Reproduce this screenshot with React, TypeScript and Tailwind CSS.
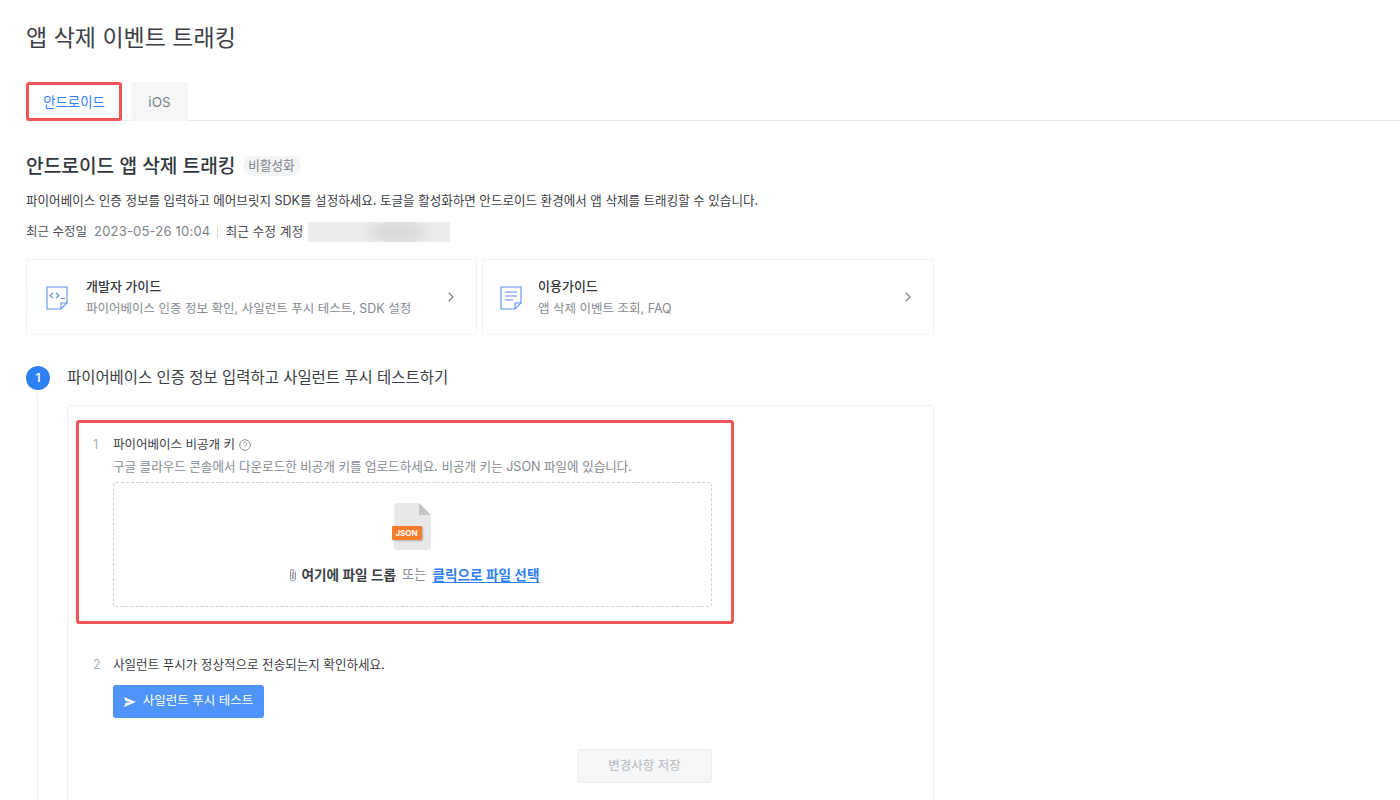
import { ChevronRight } from "lucide-react"

const font = "font-['Inter','Noto_Sans_CJK_KR',sans-serif]"

function DevIcon() {
  return (
    <svg width="22" height="24" viewBox="0 0 22 24" fill="none" stroke="#5b8ff0" strokeWidth="1.1">
      <path d="M1 1h20v16l-6 6H1z" />
      <path d="M21 17h-6v6" />
      <path d="M7 7L4 9.5 7 12M10 7l3 2.5-3 2.5M15 12.5h4" />
    </svg>
  )
}

function GuideIcon() {
  return (
    <svg width="22" height="24" viewBox="0 0 22 24" fill="none" stroke="#5b8ff0" strokeWidth="1.1">
      <path d="M1 1h20v16l-6 6H1z" />
      <path d="M21 17h-6v6" />
      <path d="M5 6h12M5 10h12M5 14h8" />
    </svg>
  )
}

function JsonIcon() {
  return (
    <div className="relative w-[40px] h-[47px] mr-[4px]">
      <svg width="37" height="47" viewBox="0 0 37 47" className="absolute right-0 top-0">
        <path d="M3 0h22l12 12v32a3 3 0 0 1-3 3H3a3 3 0 0 1-3-3V3a3 3 0 0 1 3-3z" fill="#e8e8e8" />
        <path d="M25 0l12 12H25z" fill="#c4c4c4" />
      </svg>
      <div className="absolute left-[1px] top-[23px] w-[30px] h-[14px] bg-[#f97c2b] rounded-[1px] shadow-[1px_1px_2px_rgba(0,0,0,0.25)] flex items-center justify-center text-[8px] font-bold text-white">
        JSON
      </div>
    </div>
  )
}

function GuideCard({ icon, title, desc, cardClass, iconWidth }: { icon: React.ReactNode; title: string; desc: string; cardClass: string; iconWidth: string }) {
  return (
    <div className={`h-[76px] border border-[#eef0f2] rounded-[3px] flex items-center pr-[17px] ${cardClass}`}>
      <div className={`mt-[1px] ${iconWidth}`}>{icon}</div>
      <div className="flex-1">
        <div className="text-[13px] leading-[20px] font-medium text-[#33373d]">{title}</div>
        <div className="text-[12.5px] leading-[20px] mt-[3px] text-[#868b92]">{desc}</div>
      </div>
      <ChevronRight size={16} strokeWidth={1.8} className="text-[#7c8289]" />
    </div>
  )
}

export default function App() {
  return (
    <div className={`${font} h-[800px] overflow-hidden bg-white pl-[26px] text-[#33373d]`}>
      <h1 className="pt-[22px] text-[23px] leading-[32px] text-[#3c4046]">앱 삭제 이벤트 트래킹</h1>

      <div className="mt-[28px] flex gap-[9px] h-[39px] border-b border-[#e8eaed]">
        <div className="w-[96px] h-[39px] border-[3px] border-[#f25555] rounded-[3px] flex items-center justify-center pt-[1px] text-[13.4px] text-[#2f80ff]">
          안드로이드
        </div>
        <div className="w-[57px] h-[39px] bg-[#f5f6f8] rounded-t-[2px] flex items-center justify-center pt-[1px] text-[13.5px] text-[#7e848b]">
          iOS
        </div>
      </div>

      <div className="w-[908px]">
        <div className="mt-[35px] flex items-center h-[20px]">
          <h2 className="text-[19.2px] leading-[20px] font-medium text-[#33373d]">안드로이드 앱 삭제 트래킹</h2>
          <span className="ml-[7px] h-[20px] w-[58px] rounded-full bg-[#f3f4f6] flex items-center justify-center text-[12.6px] text-[#7e848b]">
            비활성화
          </span>
        </div>
        <p className="mt-[15px] text-[12.55px] leading-[20px] text-[#3c4046] whitespace-nowrap">
          파이어베이스 인증 정보를 입력하고 에어브릿지 SDK를 설정하세요. 토글을 활성화하면 안드로이드 환경에서 앱 삭제를 트래킹할 수 있습니다.
        </p>
        <div className="mt-[11px] flex items-center h-[20px] text-[12.5px]">
          <span className="text-[#4a4e54]">최근 수정일</span>
          <span className="ml-[7px] text-[13px] tracking-[0.2px] text-[#7e848b]">2023-05-26 10:04</span>
          <span className="mx-[7px] w-px h-[11px] bg-[#d5d8dc]" />
          <span className="text-[12.8px] text-[#4a4e54]">최근 수정 계정</span>
          <div className="relative ml-[5px] w-[142px] h-[20px] bg-[#ececec] overflow-hidden">
            <div className="absolute left-[65px] top-[2px] w-[50px] h-[16px] bg-[#d6d6d6] blur-[6px]" />
          </div>
        </div>

        <div className="mt-[17px] flex gap-[5px]">
          <GuideCard icon={<DevIcon />} cardClass="w-[451px] pl-[19px]" iconWidth="w-[40px]" title="개발자 가이드" desc="파이어베이스 인증 정보 확인, 사일런트 푸시 테스트, SDK 설정" />
          <GuideCard icon={<GuideIcon />} cardClass="w-[452px] pl-[17px]" iconWidth="w-[38px]" title="이용가이드" desc="앱 삭제 이벤트 조회, FAQ" />
        </div>

        <div className="mt-[31px] flex items-center h-[24px]">
          <span className="w-[24px] h-[24px] rounded-full bg-[#2f80f5] text-white text-[12px] font-semibold flex items-center justify-center">
            1
          </span>
          <span className="ml-[17px] text-[15.45px] text-[#3c4046]">파이어베이스 인증 정보 입력하고 사일런트 푸시 테스트하기</span>
        </div>

        <div className="mt-[5px] ml-[11px] border-l border-[#eceef0] pl-[29px] pt-[10px]">
          <div className="h-[420px] border border-[#eef0f2] rounded-[3px] pt-[14px] px-[8px]">
            <div className="w-[658px] h-[204px] border-[3px] border-[#f25555] rounded-[3px] pl-[14px] pt-[12px]">
              <div className="flex">
                <span className="w-[20px] text-[12.5px] leading-[20px] text-[#a9b0ba]">1</span>
                <div>
                  <div className="flex items-center text-[12.5px] leading-[20px] text-[#3c4046]">
                    파이어베이스 비공개 키
                    <svg width="12" height="12" viewBox="0 0 12 12" fill="none" stroke="#7e848b" strokeWidth="0.9" className="ml-[4px]">
                      <circle cx="6" cy="6" r="5.3" />
                      <path d="M4.4 4.7a1.6 1.6 0 1 1 2.4 1.4c-.5.3-.8.6-.8 1.2" />
                      <path d="M6 8.6v.7" />
                    </svg>
                  </div>
                  <div className="mt-[2px] text-[12.55px] leading-[20px] text-[#868b92] whitespace-nowrap">
                    구글 클라우드 콘솔에서 다운로드한 비공개 키를 업로드하세요. 비공개 키는 JSON 파일에 있습니다.
                  </div>
                  <div className="mt-[5px] w-[599px] h-[125px] border border-dashed border-[#cfd2d6] rounded-[3px] flex flex-col items-center pt-[20px]">
                    <JsonIcon />
                    <div className="mt-[15px] pl-[2px] flex items-center h-[20px] text-[13.6px]">
                      <svg width="10" height="14" viewBox="0 0 9 13" fill="none" stroke="#9a9ea4" strokeWidth="1" className="mr-[4px]">
                        <path d="M6.8 3.5v6a2.3 2.3 0 0 1-4.6 0V3a1.5 1.5 0 0 1 3 0v6a.7.7 0 0 1-1.4 0V4" />
                      </svg>
                      <span className="font-semibold text-[#3c4046]">여기에 파일 드롭</span>
                      <span className="ml-[6px] text-[13.3px] text-[#868b92]">또는</span>
                      <span className="ml-[6px] font-semibold text-[#2f80f5] underline underline-offset-2">클릭으로 파일 선택</span>
                    </div>
                  </div>
                </div>
              </div>
            </div>

            <div className="mt-[31px] pl-[17px] flex">
              <span className="w-[20px] text-[12.5px] leading-[20px] text-[#a9b0ba]">2</span>
              <div>
                <div className="text-[12.55px] leading-[20px] text-[#3c4046]">사일런트 푸시가 정상적으로 전송되는지 확인하세요.</div>
                <button className="mt-[10px] w-[151px] h-[33px] rounded-[3px] bg-[#4f94fb] flex items-center justify-center gap-[7px] text-[12.5px] text-white">
                  <svg width="12" height="10" viewBox="0 0 12 10" fill="white">
                    <path d="M0 0l12 5-12 5 1.5-4 5-1-5-1z" />
                  </svg>
                  사일런트 푸시 테스트
                </button>
              </div>
            </div>

            <div className="mt-[31px] ml-[501px] w-[135px] h-[34px] rounded-[3px] border border-[#eceef0] bg-[#f5f6f8] flex items-center justify-center text-[12.5px] text-[#b4b8bd]">
              변경사항 저장
            </div>
          </div>
        </div>
      </div>
    </div>
  )
}
